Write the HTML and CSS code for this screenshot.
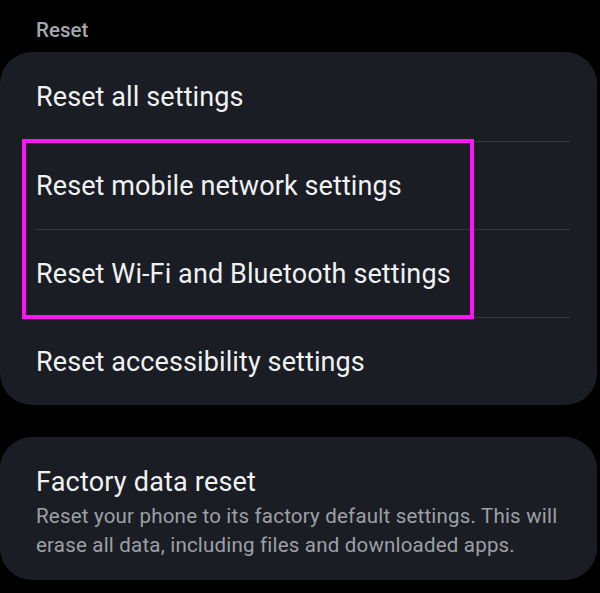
FILE: index.html
```html
<!DOCTYPE html>
<html lang="en">
<head>
<meta charset="utf-8">
<title>Reset</title>
<link rel="stylesheet" href="styles.css">
</head>
<body>
<div class="screen">
  <div class="section-label">Reset</div>
  <div class="card list">
    <div class="row">Reset all settings</div>
    <div class="row divided">Reset mobile network settings</div>
    <div class="row divided">Reset Wi-Fi and Bluetooth settings</div>
    <div class="row divided">Reset accessibility settings</div>
    <div class="highlight"></div>
  </div>
  <div class="card factory">
    <div class="title">Factory data reset</div>
    <div class="desc">Reset your phone to its factory default settings. This will erase all data, including files and downloaded apps.</div>
  </div>
</div>
</body>
</html>
```
FILE: styles.css
```css
html, body {
  margin: 0;
  padding: 0;
  background: #000;
}
body {
  font-family: Roboto, "Liberation Sans", sans-serif;
  color: #f0f1f3;
}
.screen {
  width: 600px;
  height: 593px;
  overflow: hidden;
  padding-right: 3px;
  box-sizing: border-box;
}
.section-label {
  font-size: 20.5px;
  font-weight: 500;
  color: #a3a7ae;
  line-height: 24px;
  padding: 18px 0 0 36px;
  height: 34px;
}
.card {
  background: #1a1d23;
  border-radius: 32px;
}
.list {
  position: relative;
  display: flex;
  flex-direction: column;
}
.row {
  height: 87px;
  display: flex;
  align-items: center;
  padding-left: 36px;
  font-size: 27px;
  letter-spacing: 0.1px;
  margin-right: 27px;
}
.row:first-child {
  height: 89px;
}
.row.divided {
  margin-left: 36px;
  padding-left: 0;
  border-top: 1px solid #34373d;
}
.highlight {
  position: absolute;
  left: 22px;
  top: 87px;
  width: 444px;
  height: 172px;
  border: 4px solid #ff14f6;
}
.factory {
  margin-top: 32px;
  padding: 29px 20px 20px 36px;
}
.title {
  font-size: 27px;
  letter-spacing: 0.2px;
  line-height: 32px;
}
.desc {
  margin-top: 4px;
  font-size: 20.5px;
  letter-spacing: 0.2px;
  line-height: 29px;
  color: #9da0a6;
}
```
